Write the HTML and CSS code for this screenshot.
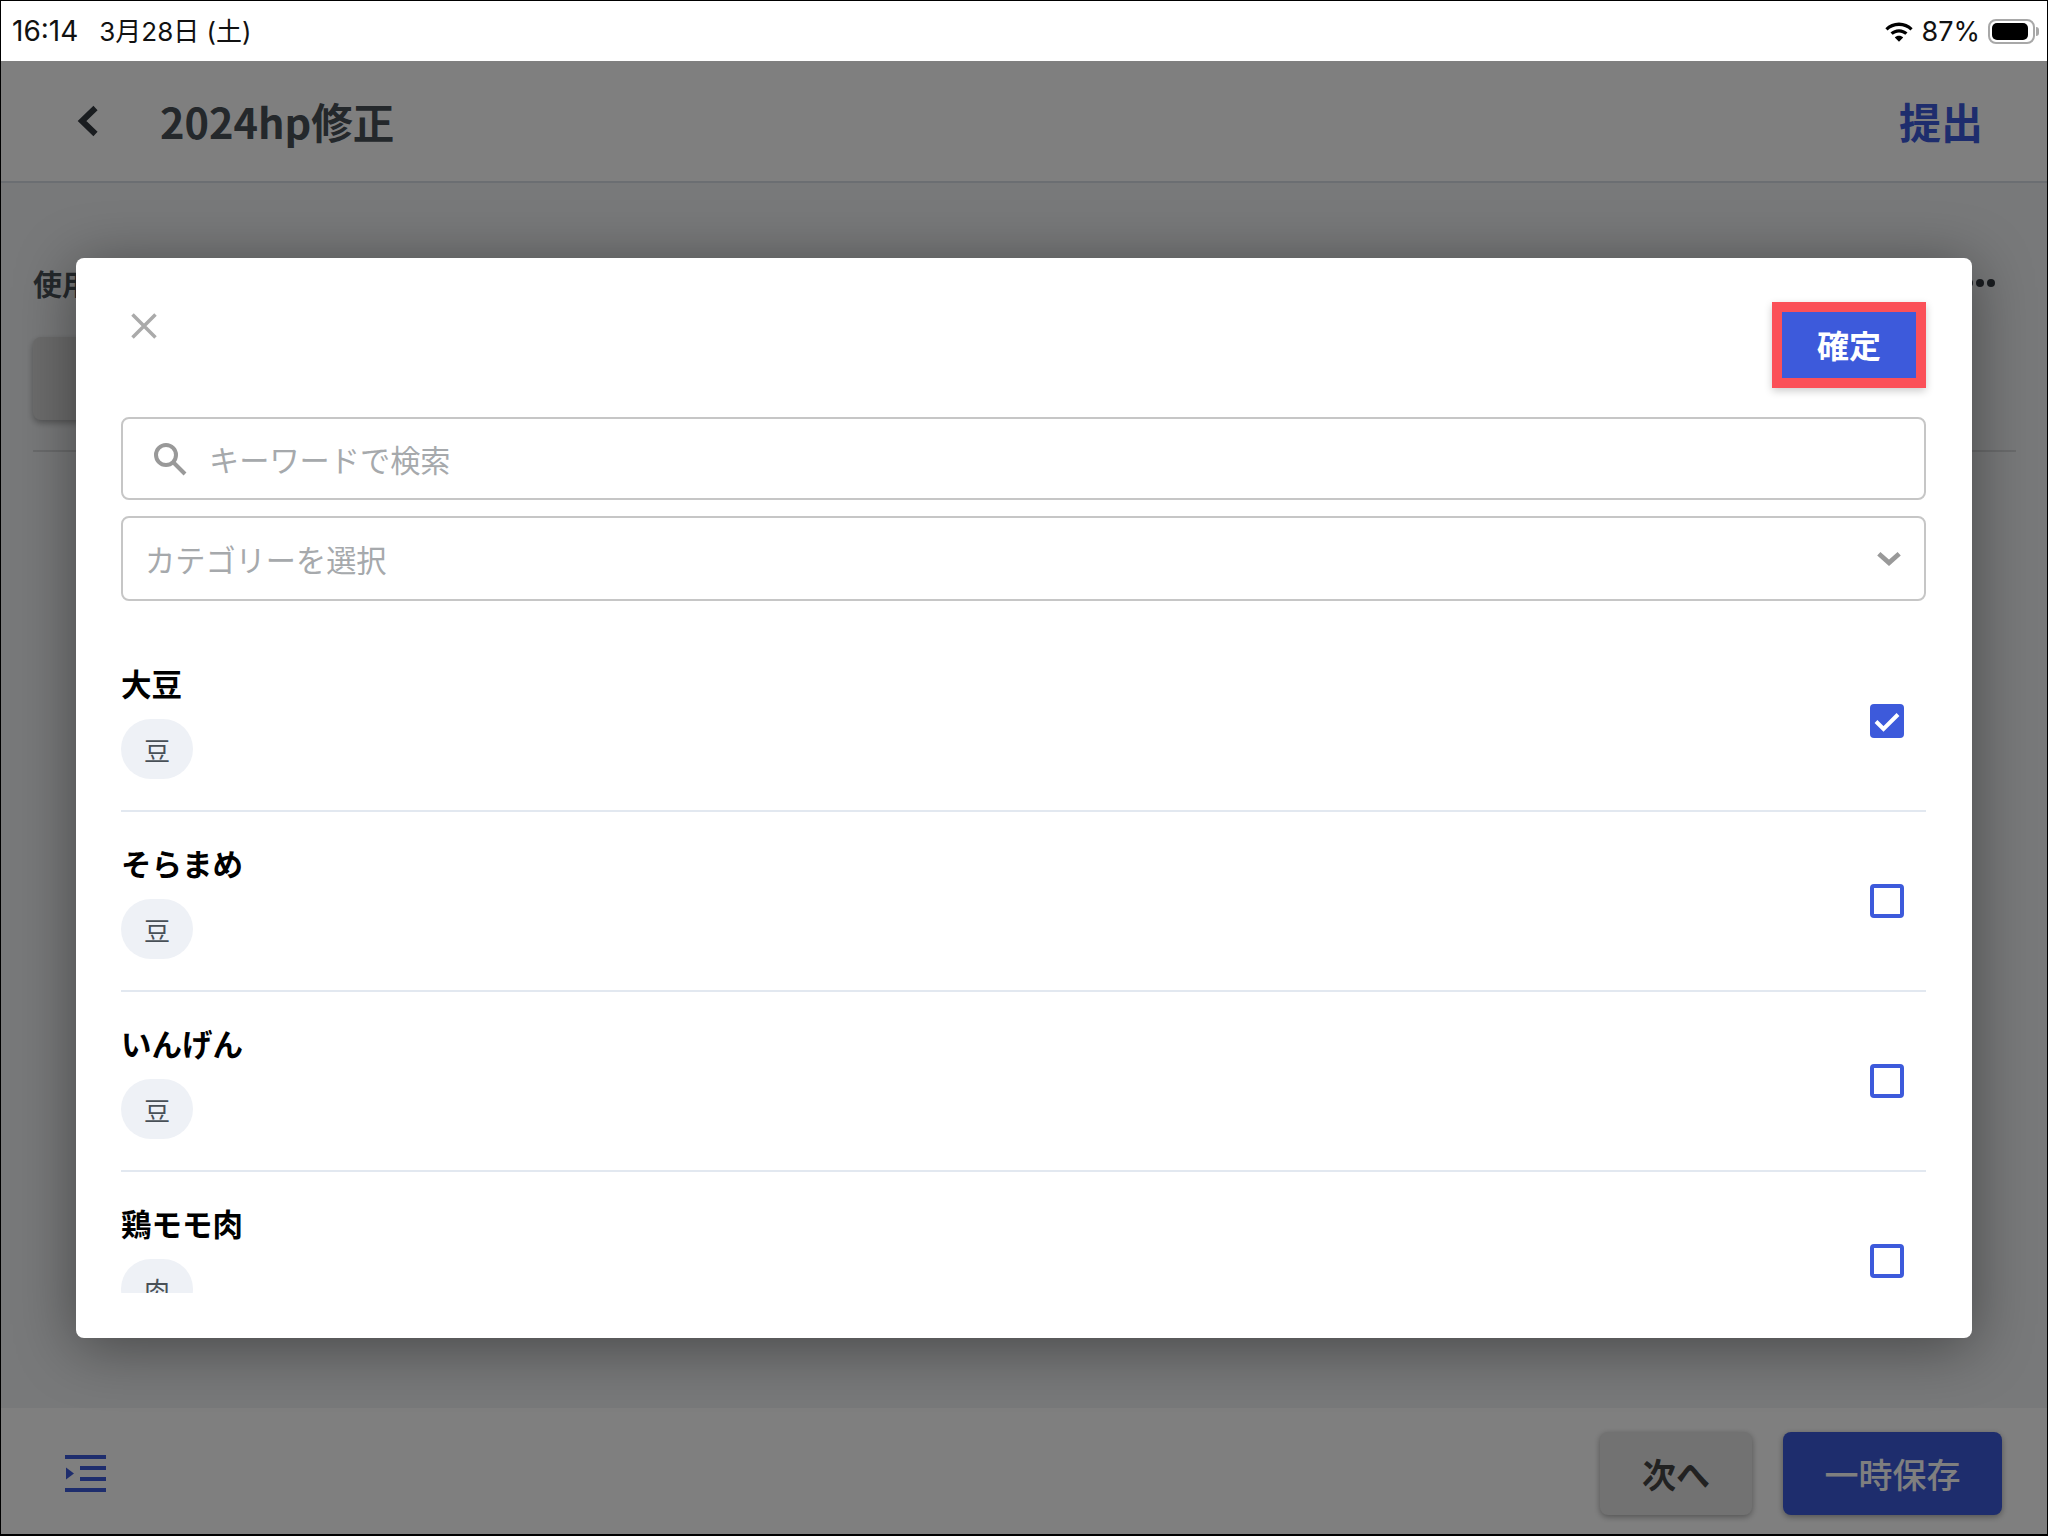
FILE: index.html
```html
<!DOCTYPE html>
<html lang="ja">
<head>
<meta charset="utf-8">
<title>2024hp修正</title>
<link rel="stylesheet" href="styles.css">
</head>
<body>
<div class="screen">
  <div class="status">
    <div class="status-left"><span class="time">16:14</span><span class="date">3月28日 (土)</span></div>
    <div class="status-right">
      <svg class="wifi" viewBox="0 0 28 20"><path d="M14 1.500C8.900 1.500 4.400 3.500 1 6.800l2.100 2.200C5.900 6.300 9.700 4.700 14 4.700s8.100 1.600 10.900 4.300L27 6.800C23.600 3.500 19.100 1.500 14 1.500zM14 7.800c-3.200 0-6 1.200-8.100 3.200L8 13.200c1.500-1.400 3.600-2.300 6-2.300s4.500.9 6 2.300l2.100-2.200C20 9 17.200 7.800 14 7.800zM14 14c-1.600 0-3 .6-4 1.600l4 4.200 4-4.200c-1-1-2.400-1.600-4-1.600z"/></svg>
      <span class="percent">87%</span>
      <div class="battery"><div class="battery-level"></div></div>
      <div class="battery-cap"></div>
    </div>
  </div>
  <div class="stage">
    <header class="topbar">
      <svg class="back" viewBox="0 0 22 32"><path d="M18.500 3 5 16l13.500 13" /></svg>
      <h1 class="title">2024hp修正</h1>
      <span class="submit">提出</span>
    </header>
    <main class="content">
      <div class="section-head">
        <span class="section-title">使用食材</span>
        <div class="dots"><i></i><i></i><i></i></div>
      </div>
      <div class="add-btn">食材を選択</div>
      <div class="rule"></div>
    </main>
    <footer class="bottombar">
      <svg class="outline" viewBox="0 0 41 37"><path d="M0 0h41v4H0zM15 11h26v4H15zM15 22h26v4H15zM0 33h41v4H0z"/><path d="M1 12.500v12l8-6z"/></svg>
      <div class="actions">
        <div class="btn btn-next">次へ</div>
        <div class="btn btn-save">一時保存</div>
      </div>
    </footer>
    <div class="overlay">
      <section class="modal">
        <div class="modal-top">
          <svg class="close" viewBox="0 0 28 28"><path d="M2.500 2.500l23 23M25.500 2.500l-23 23"/></svg>
          <div class="confirm">確定</div>
        </div>
        <div class="search">
          <svg class="search-icon" viewBox="0 0 34 34"><circle cx="13" cy="13" r="10"/><path d="M20.500 20.500 32 32"/></svg>
          <span class="placeholder">キーワードで検索</span>
        </div>
        <div class="select">
          <span class="placeholder">カテゴリーを選択</span>
          <svg class="chevron" viewBox="0 0 24 14"><path d="M2.500 2.500 12 11l9.500-8.500"/></svg>
        </div>
        <div class="list">
          <div class="row">
            <div class="row-text"><div class="name">大豆</div><div class="chip">豆</div></div>
            <div class="check checked"><svg viewBox="0 0 34 34"><path d="M6 17.500 13.500 25 28 10.500"/></svg></div>
          </div>
          <div class="row">
            <div class="row-text"><div class="name">そらまめ</div><div class="chip">豆</div></div>
            <div class="check"></div>
          </div>
          <div class="row">
            <div class="row-text"><div class="name">いんげん</div><div class="chip">豆</div></div>
            <div class="check"></div>
          </div>
          <div class="row">
            <div class="row-text"><div class="name">鶏モモ肉</div><div class="chip">肉</div></div>
            <div class="check"></div>
          </div>
        </div>
      </section>
    </div>
  </div>
</div>
</body>
</html>
```
FILE: styles.css
```css
* { box-sizing: border-box; }
html, body { margin: 0; padding: 0; }
body { width: 2048px; height: 1536px; overflow: hidden; background: #000; font-family: "Noto Sans CJK JP", "Noto Sans", sans-serif; }
.screen { width: 2048px; height: 1536px; border: 1px solid #000; border-bottom-width: 2px; display: flex; flex-direction: column; background: #fff; }

.status { height: 60px; flex: none; display: flex; justify-content: space-between; align-items: center; padding: 0 8px 0 11px; background: #fff; color: #111; font-family: Inter, "Noto Sans CJK JP", sans-serif; font-size: 27px; }
.status-left { display: flex; align-items: baseline; gap: 21px; line-height: 36px; }
.time { font-size: 28px; }
.date { font-size: 26px; }
.status-right { display: flex; align-items: center; }
.wifi { width: 30px; height: 21px; fill: #000; margin-right: 8px; }
.percent { margin-right: 9px; }
.battery { width: 47px; height: 25px; margin-left: -1px; border: 2px solid #a8a8a8; border-radius: 8px; padding: 2px; }
.battery-level { width: 36px; height: 100%; background: #000; border-radius: 5px; }
.battery-cap { width: 3px; height: 9px; margin-left: 1px; background: #a8a8a8; border-radius: 0 3px 3px 0; }

.stage { flex: 1; position: relative; display: flex; flex-direction: column; min-height: 0; background: #f1f3f5; }
.topbar { height: 122px; flex: none; display: flex; align-items: center; padding: 0 64px 2px 76px; background: #fff; border-bottom: 2px solid #d6dce4; }
.back { width: 22px; height: 32px; fill: none; stroke: #343a40; stroke-width: 6; margin: 2px 61px 0 0; }
.title { flex: 1; margin: 2px 0 0; font-size: 41.500px; font-weight: 700; color: #495057; }
.submit { font-size: 42px; font-weight: 700; color: #3d5adb; }

.content { flex: 1; padding: 0 31px 0 32px; }
.section-head { height: 60px; margin-top: 70px; display: flex; justify-content: space-between; align-items: center; }
.section-title { font-size: 29px; font-weight: 700; color: #495057; }
.dots { display: flex; gap: 3px; padding-right: 21px; }
.dots i { width: 8px; height: 8px; border-radius: 50%; background: #343a40; }
.add-btn { width: 300px; height: 83px; margin-top: 24px; display: flex; align-items: center; justify-content: center; border-radius: 8px; background: #d8d8d8; font-size: 30px; color: #444; box-shadow: 0 3px 6px rgba(0, 0, 0, .3); }
.rule { height: 2px; margin-top: 30px; background: #d4d6d9; }

.bottombar { height: 126px; flex: none; display: flex; justify-content: space-between; align-items: center; padding: 5px 45px 0 64px; background: #fff; }
.outline { width: 41px; height: 37px; fill: #3d5adb; }
.actions { display: flex; gap: 31px; }
.btn { height: 83px; display: flex; align-items: center; justify-content: center; border-radius: 8px; font-size: 34px; font-weight: 700; box-shadow: 0 2px 6px rgba(0, 0, 0, .35); }
.btn-next { width: 152px; background: #e4e4e4; color: #444; }
.btn-save { width: 219px; background: #3d5adb; color: #fff; font-weight: 500; }

.overlay { position: absolute; inset: 0; padding: 197px 75px 0; background: rgba(0, 0, 0, .5); }
.modal { width: 1896px; height: 1080px; padding: 44px 46px 45px 45px; display: flex; flex-direction: column; background: #fff; border-radius: 8px; box-shadow: 0 8px 60px rgba(0, 0, 0, .42); }
.modal-top { height: 86px; flex: none; display: flex; justify-content: space-between; align-items: flex-start; }
.close { width: 28px; height: 28px; margin: 10px 0 0 9px; fill: none; stroke: #aaa; stroke-width: 3.500; }
.confirm { width: 154px; height: 86px; padding-bottom: 2px; display: flex; align-items: center; justify-content: center; border: 10px solid #fb5058; background: #3d5adb; color: #fff; font-size: 32px; font-weight: 700; box-shadow: 0 3px 8px rgba(0, 0, 0, .2); }
.search, .select { flex: none; display: flex; align-items: center; border: 2px solid #c6c6c6; border-radius: 8px; }
.search { height: 83px; margin-top: 29px; padding-left: 30px; gap: 22px; }
.select { height: 85px; margin-top: 16px; padding: 0 22px; justify-content: space-between; }
.search-icon { width: 34px; height: 34px; fill: none; stroke: #999; stroke-width: 4; }
.placeholder { font-size: 30.200px; color: #a6a9ac; }
.chevron { width: 26px; height: 15px; fill: none; stroke: #999; stroke-width: 4.500; }

.list { flex: 1; min-height: 0; margin-top: 31px; overflow: hidden; }
.row { height: 180px; display: flex; justify-content: space-between; align-items: center; padding: 0 22px 0 0; border-bottom: 2px solid #e2e8f0; }
.row-text { align-self: flex-start; padding-top: 29px; }
.name { height: 44px; line-height: 44px; font-size: 30.500px; font-weight: 700; color: #000; }
.chip { width: 72px; height: 60px; margin-top: 14px; display: flex; align-items: center; justify-content: center; border-radius: 30px; background: #eef1f6; font-size: 26px; color: #495057; }
.check { width: 34px; height: 34px; border: 4px solid #3d5adb; border-radius: 4px; }
.check.checked { border: 0; background: #3d5adb; }
.check svg { display: block; width: 34px; height: 34px; fill: none; stroke: #fff; stroke-width: 4; }
```
